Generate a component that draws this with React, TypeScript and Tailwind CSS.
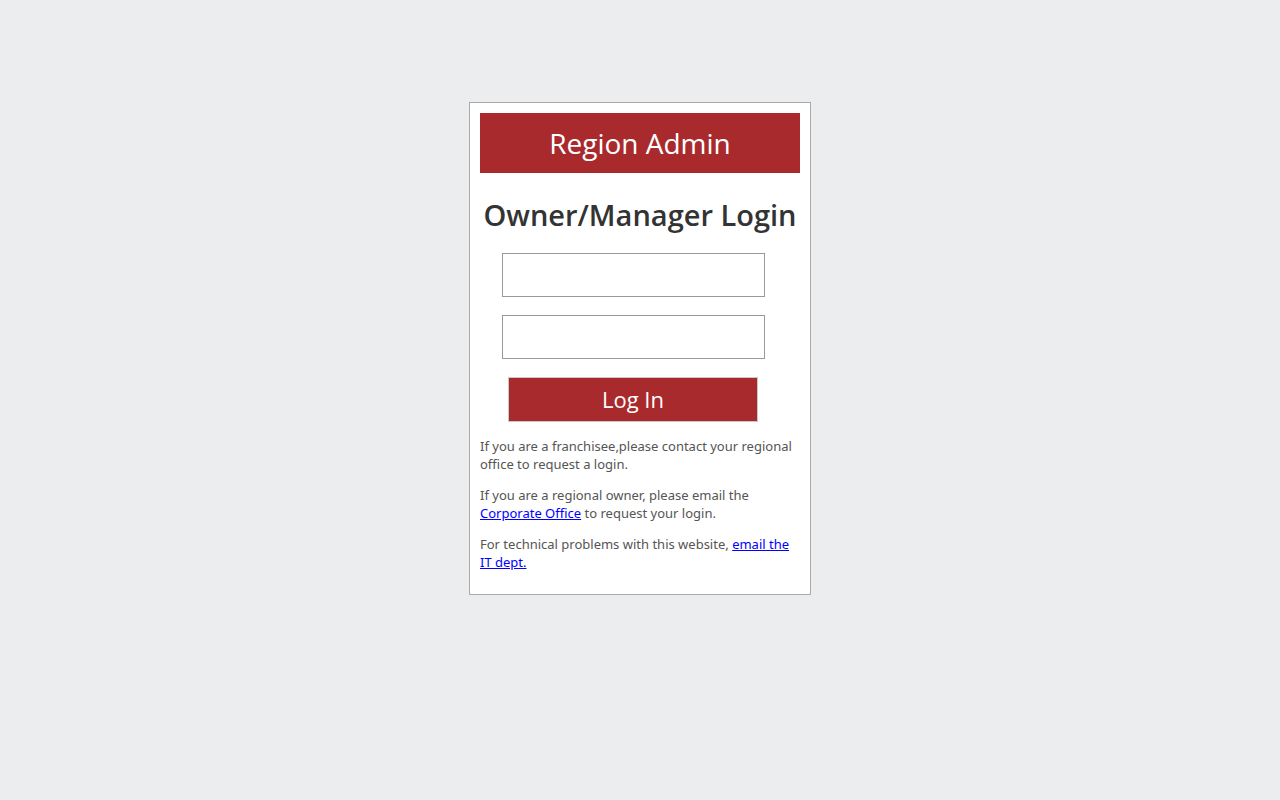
export default function App() {
  return (
    <div className="min-h-screen bg-[#ecedef] pt-[102px]">
      <div className="mx-auto w-[342px] border border-[#aaaaaa] bg-white p-[10px] pb-[23px]">
        <div className="flex h-[60px] items-center justify-center bg-[#a92a2c] text-[28px] text-white font-['Open_Sans',sans-serif]">
          Region Admin
        </div>
        <h1 className="mt-[22px] text-center text-[29px] font-semibold leading-[40px] text-[#333333] font-['Open_Sans',sans-serif]">
          Owner/Manager Login
        </h1>
        <div className="mt-[18px] flex flex-col items-center pr-[14px]">
          <input className="h-[44px] w-[263px] border border-[#999999] bg-white outline-none" />
          <input type="password" className="mt-[18px] h-[44px] w-[263px] border border-[#999999] bg-white outline-none" />
          <button className="mt-[18px] h-[45px] w-[250px] border border-[#c8c8c8] bg-[#a92a2c] text-[22px] text-white font-['Open_Sans',sans-serif]">
            Log In
          </button>
        </div>
        <div className="mt-[16px] text-[13px] leading-[17.5px] text-[#555555] font-['Noto_Sans',sans-serif]">
          <p>If you are a franchisee,please contact your regional office to request a login.</p>
          <p className="mt-[14px]">
            If you are a regional owner, please email the{" "}
            <a href="#" className="text-[#0000ff] underline">Corporate Office</a> to request your login.
          </p>
          <p className="mt-[14px]">
            For technical problems with this website,{" "}
            <a href="#" className="text-[#0000ff] underline">email the IT dept.</a>
          </p>
        </div>
      </div>
    </div>
  );
}
